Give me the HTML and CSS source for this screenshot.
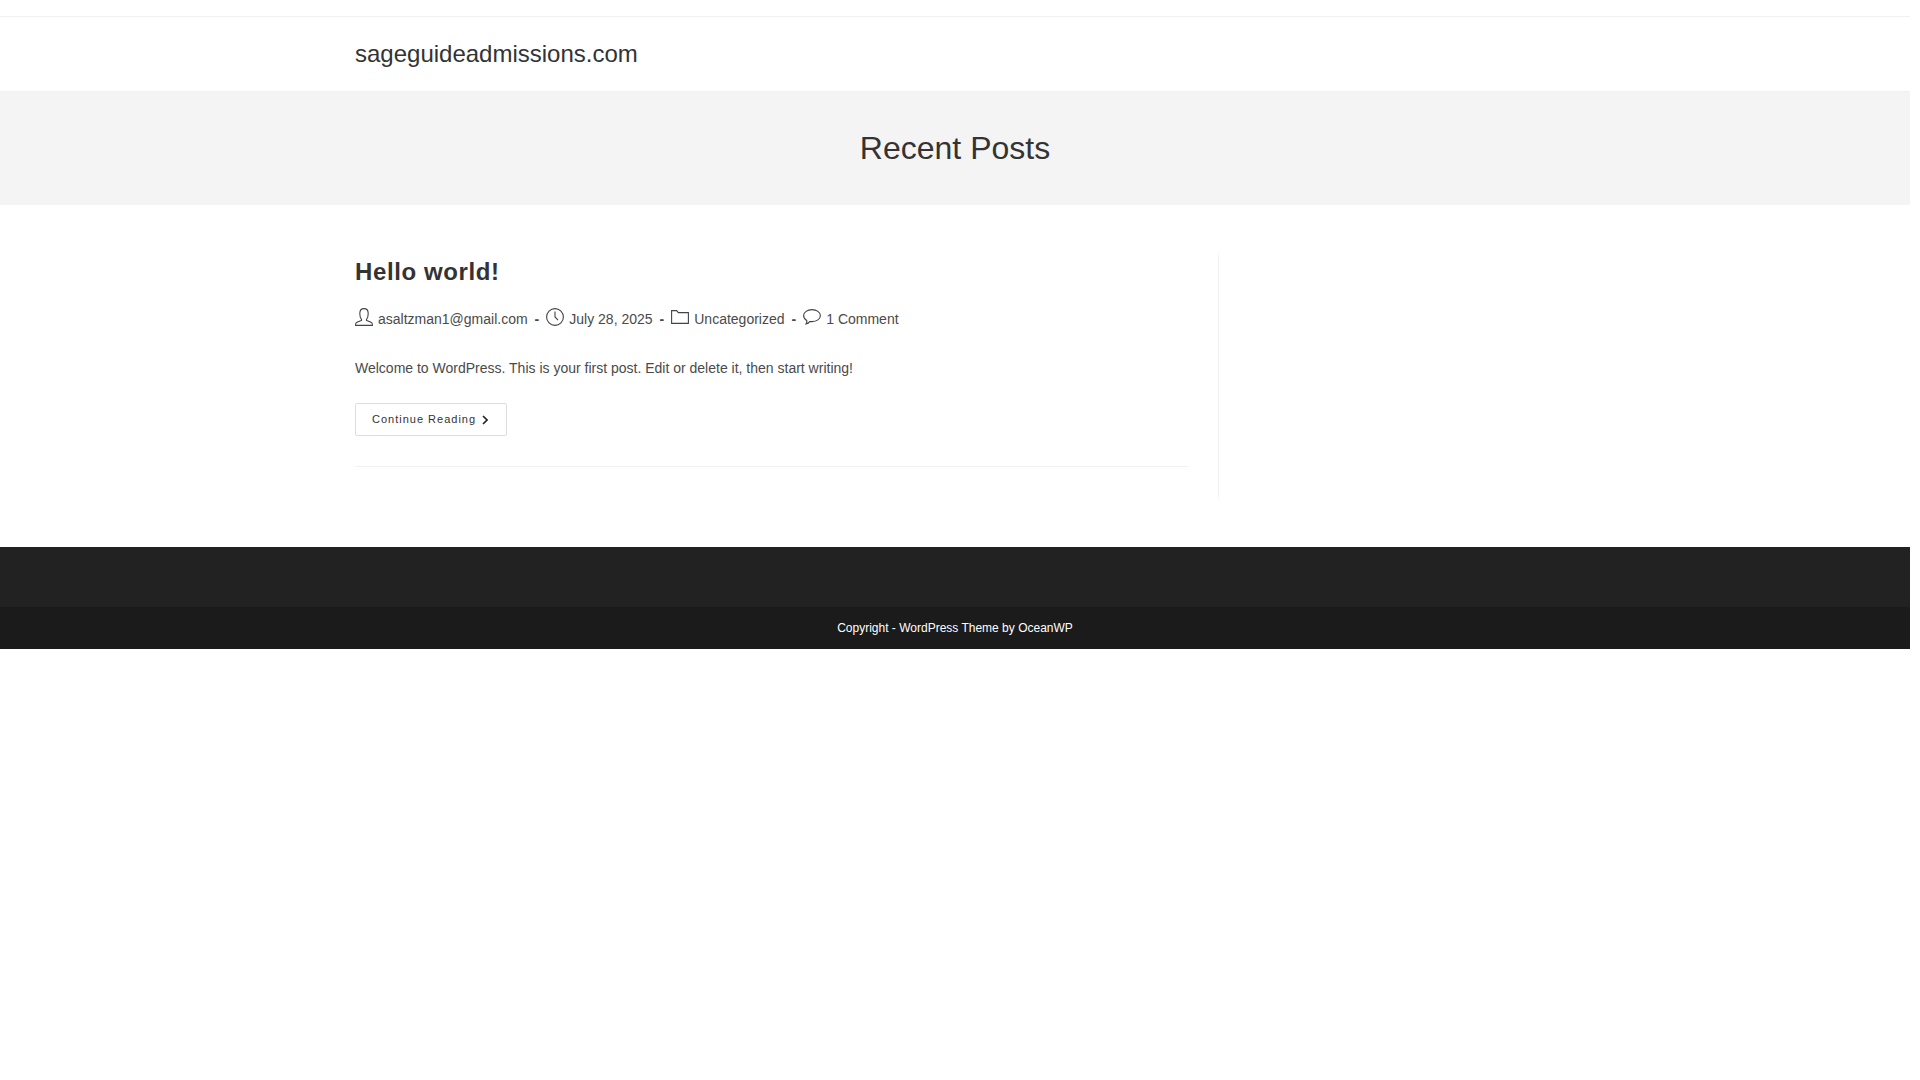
FILE: index.html
```html
<!DOCTYPE html>
<html lang="en">
<head>
<meta charset="utf-8">
<meta name="viewport" content="width=device-width, initial-scale=1">
<title>sageguideadmissions.com</title>
<link rel="stylesheet" href="styles.css">
</head>
<body>
<div class="top-bar"></div>
<header class="site-header">
  <div class="container">
    <a class="site-title" href="#">sageguideadmissions.com</a>
  </div>
</header>
<section class="page-header">
  <h1 class="page-title">Recent Posts</h1>
</section>
<main class="container layout">
  <div class="content">
    <article class="post">
      <h2 class="post-title"><a href="#">Hello world!</a></h2>
      <ul class="meta">
        <li><svg class="icon" viewBox="0 0 18 18"><path d="M6.500 11.500C5.200 10.200 4.800 8 4.800 5.500 4.800 2.500 6.300.6 9 .6s4.200 1.900 4.200 4.900c0 2.500-.4 4.700-1.700 6v1c1.800.6 4.700 1.400 5.500 2.500.4.600.4 1.500.4 2.400H.6c0-.9 0-1.800.4-2.400.8-1.100 3.700-1.900 5.500-2.500z"/></svg><a href="#">asaltzman1@gmail.com</a></li>
        <li><svg class="icon" viewBox="0 0 18 18"><circle cx="9" cy="9" r="8.400"/><path d="M9 3.500V9l3 3.200"/></svg>July 28, 2025</li>
        <li><svg class="icon" viewBox="0 0 18 18"><path d="M.6 15.400V2.600h5l1.800 2h10v10.800z"/></svg><a href="#">Uncategorized</a></li>
        <li><svg class="icon" viewBox="0 0 18 18"><path d="M9 1.600c4.700 0 8.400 2.600 8.400 6s-3.700 6-8.400 6c-.7 0-1.400 0-2-.2-1 1.300-2.300 2.300-4 2.600.7-1 1-2.100.8-3.400C1.900 11.500.6 9.700.6 7.600c0-3.400 3.700-6 8.400-6z"/></svg><a href="#">1 Comment</a></li>
      </ul>
      <p class="summary">Welcome to WordPress. This is your first post. Edit or delete it, then start writing!</p>
      <a class="read-more" href="#">Continue Reading<svg class="chevron" viewBox="0 0 6 10"><path d="M1 1l4 4-4 4"/></svg></a>
    </article>
  </div>
</main>
<footer>
  <div class="footer-widgets"></div>
  <div class="footer-bottom">Copyright - WordPress Theme by OceanWP</div>
</footer>
</body>
</html>
```
FILE: styles.css
```css
* {
  box-sizing: border-box;
}

body {
  margin: 0 10px 0 0;
  background: #fff;
  color: #4a4a4a;
  font: 14px/25px "Liberation Sans", Arial, sans-serif;
}

h1, h2, p, ul {
  margin: 0;
  padding: 0;
}

a {
  color: inherit;
  text-decoration: none;
}

.container {
  width: 1200px;
  max-width: 90%;
  margin: 0 auto;
}

.top-bar {
  height: 17px;
  border-bottom: 1px solid #f1f1f1;
}

.site-header {
  border-bottom: 1px solid #f1f1f1;
}

.site-title {
  display: block;
  color: #333;
  font-size: 24px;
  line-height: 74px;
}

.page-header {
  padding: 34px 0;
  background: #f4f4f4;
  text-align: center;
}

.page-title {
  color: #333;
  font-size: 32px;
  font-weight: 400;
  line-height: 45px;
}

.layout {
  padding: 50px 0;
}

.content {
  width: 72%;
  padding-right: 30px;
  border-right: 1px solid #f1f1f1;
  padding-bottom: 30px;
}

.post {
  padding-bottom: 30px;
  border-bottom: 1px solid #f1f1f1;
}

.post-title {
  color: #333;
  font-size: 24px;
  line-height: 34px;
  letter-spacing: 0.025em;
}

.meta {
  display: flex;
  flex-wrap: wrap;
  margin: 18px 0 24px;
  list-style: none;
}

.meta li {
  display: flex;
  align-items: center;
}

.meta li + li::before {
  content: "-";
  margin: 0 7px;
  font-weight: 700;
}

.icon {
  width: 18px;
  height: 18px;
  margin: 0 5px 6px 0;
  fill: none;
  stroke: #444;
  stroke-width: 1.1;
}

.summary {
  margin-bottom: 22px;
}

.read-more {
  display: inline-flex;
  align-items: center;
  height: 33px;
  padding: 0 18px 0 16px;
  border: 1px solid #ddd;
  border-radius: 2px;
  color: #333;
  font-size: 11px;
  letter-spacing: 1px;
  vertical-align: top;
}

.chevron {
  width: 6px;
  height: 10px;
  margin-left: 6px;
  fill: none;
  stroke: #222;
  stroke-width: 1.6;
}

.footer-widgets {
  height: 60px;
  background: #222;
}

.footer-bottom {
  padding: 10px 0;
  background: #1b1b1b;
  color: #fff;
  font-size: 12px;
  line-height: 22px;
  text-align: center;
}
```
